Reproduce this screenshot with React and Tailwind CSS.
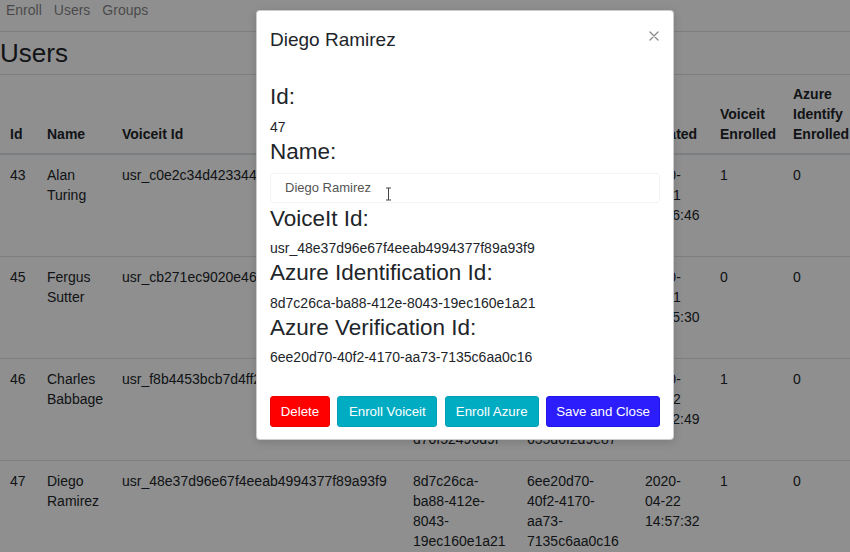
const users = [
  {
    id: 43,
    name: 'Alan Turing',
    voiceitId: 'usr_c0e2c34d4233447a8d9c2b1e6f4a0d35',
    azureId: '3f1a9c2e-7b44-4d1e-9a0c-5e2b8f71c3d4',
    azureVerify: 'a92b6e10-5c3d-4f8a-b217-0d4e9c6f1a83',
    created: '2020-04-21 14:36:46',
    voiceit: 1,
    azure: 0,
    verify: 0
  },
  {
    id: 45,
    name: 'Fergus Sutter',
    voiceitId: 'usr_cb271ec9020e46b7a3f1d8e6c2094b5a',
    azureId: 'c47d2b19-e83a-4a56-8f0d-2b91e7c5a604',
    azureVerify: '5e8f3a71-2d6c-4b09-9e14-f7a3c0d2b865',
    created: '2020-04-21 14:45:30',
    voiceit: 0,
    azure: 0,
    verify: 0
  },
  {
    id: 46,
    name: 'Charles Babbage',
    voiceitId: 'usr_f8b4453bcb7d4ff2a6e09c1d3b75e8a4',
    azureId: '9b2e4c71-3a8d-4e1f-b560-d70f52496d9f',
    azureVerify: '1c7a9e3b-f42d-4b86-a0e5-655d0f2d9e87',
    created: '2020-04-22 14:52:49',
    voiceit: 1,
    azure: 0,
    verify: 0
  },
  {
    id: 47,
    name: 'Diego Ramirez',
    voiceitId: 'usr_48e37d96e67f4eeab4994377f89a93f9',
    azureId: '8d7c26ca-ba88-412e-8043-19ec160e1a21',
    azureVerify: '6ee20d70-40f2-4170-aa73-7135c6aa0c16',
    created: '2020-04-22 14:57:32',
    voiceit: 1,
    azure: 0,
    verify: 0
  }
]

const columns = [
  { label: 'Id', w: 'w-[37px]' },
  { label: 'Name', w: 'w-[75px]' },
  { label: 'Voiceit Id', w: 'w-[291px]' },
  { label: 'Azure Identification Id', w: 'w-[114px]' },
  { label: 'Azure Verification Id', w: 'w-[118px]' },
  { label: 'Created', w: 'w-[75px]' },
  { label: 'Voiceit Enrolled', w: 'w-[73px]' },
  { label: 'Azure Identify Enrolled', w: 'w-[75px]' },
  { label: 'Azure Verify Enrolled', w: 'w-[90px]' }
]

function UsersPage() {
  return (
    <div className="text-[#212529]">
      <nav className="h-[32px] flex gap-[12px] pl-[6px] border-b border-[#dee2e6] text-[14px] leading-[20px] text-black/50">
        <span>Enroll</span>
        <span>Users</span>
        <span>Groups</span>
      </nav>
      <h2 className="text-[26px] leading-[42px] font-normal">Users</h2>
      <table className="table-fixed border-collapse w-[948px] text-[14px] leading-[20px]">
        <thead>
          <tr>
            {columns.map((c) => (
              <th
                key={c.label}
                className={`${c.w} align-bottom text-left font-bold px-[10px] pt-[9px] pb-[9px] border-t border-[#dee2e6] border-b-2`}
              >
                {c.label}
              </th>
            ))}
          </tr>
        </thead>
        <tbody>
          {users.map((u) => (
            <tr key={u.id} className="border-b border-[#dee2e6] align-top">
              <td className="px-[10px] pt-[10px] pb-[11px]">{u.id}</td>
              <td className="px-[10px] pt-[10px] pb-[11px]">{u.name}</td>
              <td className="px-[10px] pt-[10px] pb-[11px]">{u.voiceitId}</td>
              <td className="px-[10px] pt-[10px] pb-[11px]">{u.azureId}</td>
              <td className="px-[10px] pt-[10px] pb-[11px]">{u.azureVerify}</td>
              <td className="px-[10px] pt-[10px] pb-[11px]">{u.created}</td>
              <td className="px-[10px] pt-[10px] pb-[11px]">{u.voiceit}</td>
              <td className="px-[10px] pt-[10px] pb-[11px]">{u.azure}</td>
              <td className="px-[10px] pt-[10px] pb-[11px]">{u.verify}</td>
            </tr>
          ))}
        </tbody>
      </table>
    </div>
  )
}

function UserModal({ user }) {
  return (
    <div className="absolute left-[256px] top-[10px] w-[418px] bg-white border border-black/20 rounded-[4px] shadow-[0_2px_8px_rgba(0,0,0,0.15)] text-[#212529]">
      <div className="relative px-[13px] pt-[15px] pb-[14px]">
        <h5 className="text-[19px] leading-[28px] font-normal">{user.name}</h5>
        <svg className="absolute right-[14px] top-[20px]" width="10" height="10" viewBox="0 0 10 10">
          <path d="M1 1L9 9M9 1L1 9" stroke="#8c8c8c" strokeWidth="1.4" strokeLinecap="round" />
        </svg>
      </div>
      <div className="px-[13px] pt-[14px]">
        <div className="text-[22.5px] leading-[30px] mb-[5px]">Id:</div>
        <div className="text-[14px] leading-[20px]">{user.id}</div>
        <div className="text-[22.5px] leading-[30px] mb-[6px]">Name:</div>
        <div className="relative h-[30px] mb-[1px] border border-[#f3f4f6] rounded-[3px] pl-[14px] flex items-center text-[13px] text-[#555]">
          Diego Ramirez
          <svg className="absolute left-[114px] top-[13px]" width="7" height="14" viewBox="0 0 7 14">
            <path d="M1 1H6M3.5 1V13M1 13H6" stroke="#444" strokeWidth="1" fill="none" />
          </svg>
        </div>
        <div className="text-[22.5px] leading-[30px] mb-[4px]">VoiceIt Id:</div>
        <div className="text-[14px] leading-[20px]">{user.voiceitId}</div>
        <div className="text-[22.5px] leading-[30px] mb-[5px]">Azure Identification Id:</div>
        <div className="text-[14px] leading-[20px]">{user.azureId}</div>
        <div className="text-[22.5px] leading-[30px] mb-[4px]">Azure Verification Id:</div>
        <div className="text-[14px] leading-[20px]">{user.azureVerify}</div>
      </div>
      <div className="flex gap-[7.5px] px-[13px] pt-[29px] pb-[12px] text-[13.3px] text-white">
        <button className="w-[60px] h-[31px] rounded-[3px] bg-[#ff0000] border border-[#ec0000]">Delete</button>
        <button className="w-[100px] h-[31px] rounded-[3px] bg-[#00acc2] border border-[#009fb4]">Enroll Voiceit</button>
        <button className="w-[94px] h-[31px] rounded-[3px] bg-[#00acc2] border border-[#009fb4]">Enroll Azure</button>
        <button className="w-[114px] h-[31px] rounded-[3px] bg-[#2b1dfc] border border-[#2214e6]">Save and Close</button>
      </div>
    </div>
  )
}

export default function App() {
  return (
    <div className="relative w-[850px] h-[552px] overflow-hidden bg-white font-['Liberation_Sans',Arial,sans-serif]">
      <UsersPage />
      <div className="absolute inset-0 bg-black/[0.44]" />
      <UserModal user={users[3]} />
    </div>
  )
}
